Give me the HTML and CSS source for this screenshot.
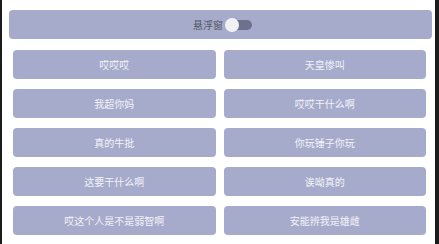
FILE: index.html
```html
<!DOCTYPE html>
<html>
<head>
<meta charset="utf-8">
<link rel="stylesheet" href="styles.css">
</head>
<body>
<div class="frame">
  <div class="topbar">
    <span class="label">悬浮窗</span>
    <span class="switch"><span class="knob"></span></span>
  </div>
  <div class="grid">
    <div class="btn">哎哎哎</div>
    <div class="btn">天皇惨叫</div>
    <div class="btn">我超你妈</div>
    <div class="btn">哎哎干什么啊</div>
    <div class="btn">真的牛批</div>
    <div class="btn">你玩锤子你玩</div>
    <div class="btn">这要干什么啊</div>
    <div class="btn">诶呦真的</div>
    <div class="btn">哎这个人是不是弱智啊</div>
    <div class="btn">安能辨我是雄雌</div>
  </div>
</div>
</body>
</html>
```
FILE: styles.css
```css
html, body {
  margin: 0;
  padding: 0;
  background: #1b1b1b;
}
body {
  width: 439px;
  height: 244px;
  overflow: hidden;
  font-family: "Noto Sans CJK SC", "Noto Sans", sans-serif;
}
.frame {
  margin-left: 2px;
  width: 433px;
  height: 244px;
  background: #ffffff;
  padding-top: 10px;
  box-sizing: border-box;
}
.topbar {
  margin: 0 3px 0 7px;
  height: 29px;
  background: #a6abcc;
  border-radius: 4px;
  display: flex;
  align-items: center;
  justify-content: center;
  gap: 2px;
  padding-left: 4px;
}
.label {
  font-size: 10px;
  color: #555866;
  line-height: 1;
}
.switch {
  position: relative;
  width: 27px;
  height: 13px;
  display: inline-block;
}
.switch::before {
  content: "";
  position: absolute;
  left: 6px;
  right: 0;
  top: 2px;
  height: 10px;
  border-radius: 5px;
  background: #6d718d;
}
.knob {
  position: absolute;
  left: 0;
  top: 0;
  width: 14px;
  height: 14px;
  border-radius: 50%;
  background: #f1f1f4;
}
.grid {
  margin: 11px 9px 0 11px;
  display: grid;
  grid-template-columns: 1fr 1fr;
  column-gap: 8px;
  row-gap: 10px;
}
.btn {
  height: 29px;
  background: #a6abcc;
  border-radius: 4px;
  display: flex;
  align-items: center;
  justify-content: center;
  font-size: 10px;
  color: #f2f3f8;
}
```
